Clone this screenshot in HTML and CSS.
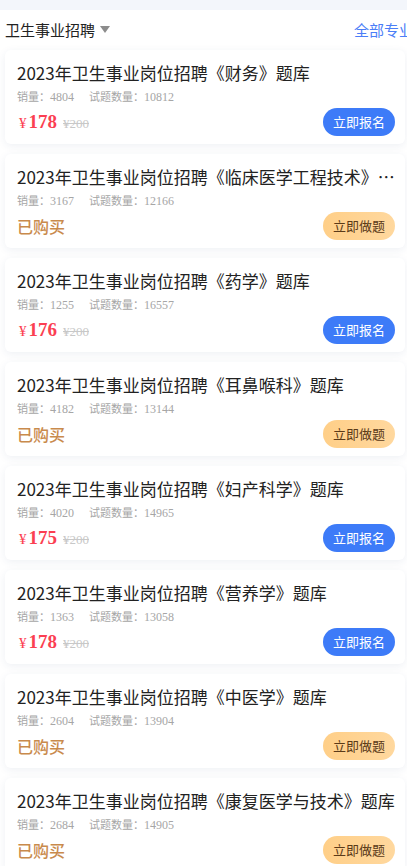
FILE: index.html
```html
<!DOCTYPE html>
<html lang="zh">
<head>
<meta charset="utf-8">
<link rel="stylesheet" href="styles.css">
</head>
<body>
<div class="topband"></div>
<div class="header">
  <div class="cat">卫生事业招聘<span class="tri"></span></div>
  <div class="all">全部专业</div>
</div>
<div class="list">
  <div class="card">
    <div class="title">2023年卫生事业岗位招聘《财务》题库</div>
    <div class="meta"><span>销量：<b>4804</b></span><span>试题数量：<b>10812</b></span></div>
    <div class="row"><div class="price"><span class="yen">¥</span><span class="num">178</span><span class="old">¥200</span></div><div class="btn blue">立即报名</div></div>
  </div>
  <div class="card">
    <div class="title">2023年卫生事业岗位招聘《临床医学工程技术》题库</div>
    <div class="meta"><span>销量：<b>3167</b></span><span>试题数量：<b>12166</b></span></div>
    <div class="row"><div class="bought">已购买</div><div class="btn gold">立即做题</div></div>
  </div>
  <div class="card">
    <div class="title">2023年卫生事业岗位招聘《药学》题库</div>
    <div class="meta"><span>销量：<b>1255</b></span><span>试题数量：<b>16557</b></span></div>
    <div class="row"><div class="price"><span class="yen">¥</span><span class="num">176</span><span class="old">¥200</span></div><div class="btn blue">立即报名</div></div>
  </div>
  <div class="card">
    <div class="title">2023年卫生事业岗位招聘《耳鼻喉科》题库</div>
    <div class="meta"><span>销量：<b>4182</b></span><span>试题数量：<b>13144</b></span></div>
    <div class="row"><div class="bought">已购买</div><div class="btn gold">立即做题</div></div>
  </div>
  <div class="card">
    <div class="title">2023年卫生事业岗位招聘《妇产科学》题库</div>
    <div class="meta"><span>销量：<b>4020</b></span><span>试题数量：<b>14965</b></span></div>
    <div class="row"><div class="price"><span class="yen">¥</span><span class="num">175</span><span class="old">¥200</span></div><div class="btn blue">立即报名</div></div>
  </div>
  <div class="card">
    <div class="title">2023年卫生事业岗位招聘《营养学》题库</div>
    <div class="meta"><span>销量：<b>1363</b></span><span>试题数量：<b>13058</b></span></div>
    <div class="row"><div class="price"><span class="yen">¥</span><span class="num">178</span><span class="old">¥200</span></div><div class="btn blue">立即报名</div></div>
  </div>
  <div class="card">
    <div class="title">2023年卫生事业岗位招聘《中医学》题库</div>
    <div class="meta"><span>销量：<b>2604</b></span><span>试题数量：<b>13904</b></span></div>
    <div class="row"><div class="bought">已购买</div><div class="btn gold">立即做题</div></div>
  </div>
  <div class="card">
    <div class="title">2023年卫生事业岗位招聘《康复医学与技术》题库</div>
    <div class="meta"><span>销量：<b>2684</b></span><span>试题数量：<b>14905</b></span></div>
    <div class="row"><div class="bought">已购买</div><div class="btn gold">立即做题</div></div>
  </div>
</div>
</body>
</html>
```
FILE: styles.css
```css
html, body {
  margin: 0;
  padding: 0;
  background: #fff;
  overflow-x: hidden;
}
body {
  width: 407px;
  font-family: "Noto Sans CJK SC", "Noto Sans", sans-serif;
}
.topband {
  height: 10px;
  background: #f3f6fb;
}
.header {
  height: 38px;
  display: flex;
  align-items: center;
  justify-content: space-between;
  padding-left: 5px;
  margin-right: -9px;
  white-space: nowrap;
}
.cat {
  font-size: 15px;
  color: #222;
  display: flex;
  align-items: center;
}
.tri {
  display: inline-block;
  width: 0;
  height: 0;
  border-left: 5px solid transparent;
  border-right: 5px solid transparent;
  border-top: 7px solid #8c8c8c;
  margin-left: 5px;
  margin-top: 1px;
}
.all {
  font-size: 15px;
  color: #4b7ef7;
  margin-right: 2px;
}
.list {
  display: flex;
  flex-direction: column;
  gap: 10px;
  padding: 2px 0 10px 5px;
}
.card {
  width: 400px;
  box-sizing: border-box;
  height: 94px;
  background: #fff;
  border-radius: 6px;
  box-shadow: 0 2px 8px rgba(40, 60, 120, 0.08);
  padding: 11px 10px 0 12px;
}
.title {
  font-size: 17px;
  line-height: 24px;
  color: #222;
  white-space: nowrap;
  overflow: hidden;
  text-overflow: ellipsis;
}
.meta {
  margin-top: 1px;
  font-size: 11px;
  line-height: 20px;
  color: #a6a6a6;
  display: flex;
  gap: 15px;
}
.meta b {
  font-family: "Liberation Serif", serif;
  font-weight: normal;
  font-size: 12px;
}
.row {
  display: flex;
  align-items: center;
  justify-content: space-between;
  height: 28px;
  margin-top: 1px;
}
.price {
  display: flex;
  align-items: baseline;
  font-family: "Liberation Serif", serif;
  color: #fb3f52;
  padding-left: 2px;
}
.yen {
  font-size: 15px;
  margin-right: 2px;
}
.num {
  font-size: 19px;
  font-weight: bold;
}
.old {
  font-size: 13px;
  color: #c8c8c8;
  text-decoration: line-through;
  margin-left: 6px;
}
.bought {
  font-size: 16px;
  color: #c98a4c;
  font-weight: 500;
}
.btn {
  width: 72px;
  height: 28px;
  border-radius: 14px;
  font-size: 13px;
  line-height: 28px;
  text-align: center;
}
.blue {
  background: #3d7bf8;
  color: #fff;
}
.gold {
  background: linear-gradient(90deg, #ffcf88, #ffd89e);
  color: #5b3a18;
}
```
